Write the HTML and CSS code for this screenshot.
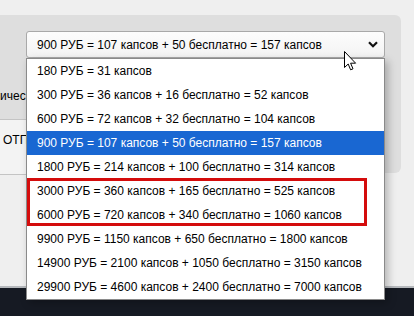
FILE: index.html
```html
<!DOCTYPE html>
<html lang="ru">
<head>
    <meta charset="UTF-8">
    <meta name="viewport" content="width=device-width, initial-scale=1.0">
    <title>Покупка капсов</title>
    <link rel="stylesheet" href="styles.css">
</head>
<body>
    <div class="page">
        <div class="panel">
            <div class="field">
                <div class="select">
                    <span>900 РУБ = 107 капсов + 50 бесплатно = 157 капсов</span>
                    <svg class="chevron" width="10" height="7" viewBox="0 0 10 7">
                        <path d="M1 1.2 L5 5.2 L9 1.2" fill="none" stroke="#111" stroke-width="2.2"/>
                    </svg>
                </div>
                <ul class="options">
                    <li>180 РУБ = 31 капсов</li>
                    <li>300 РУБ = 36 капсов + 16 бесплатно = 52 капсов</li>
                    <li>600 РУБ = 72 капсов + 32 бесплатно = 104 капсов</li>
                    <li class="selected">900 РУБ = 107 капсов + 50 бесплатно = 157 капсов</li>
                    <li>1800 РУБ = 214 капсов + 100 бесплатно = 314 капсов</li>
                    <li class="marked">
                        <div>3000 РУБ = 360 капсов + 165 бесплатно = 525 капсов</div>
                        <div>6000 РУБ = 720 капсов + 340 бесплатно = 1060 капсов</div>
                    </li>
                    <li>9900 РУБ = 1150 капсов + 650 бесплатно = 1800 капсов</li>
                    <li>14900 РУБ = 2100 капсов + 1050 бесплатно = 3150 капсов</li>
                    <li>29900 РУБ = 4600 капсов + 2400 бесплатно = 7000 капсов</li>
                </ul>
                <svg class="cursor" width="13" height="21" viewBox="0 0 13 21">
                    <path d="M0.5 0.5 L0.5 16.5 L4.2 13 L6.6 18.8 L9 17.8 L6.6 12.2 L11.6 12.2 Z" fill="#fff" stroke="#000" stroke-width="1"/>
                </svg>
            </div>
            <div class="row">ическ</div>
            <div class="send">ОТП</div>
        </div>
    </div>
    <div class="bottom"></div>
</body>
</html>
```

FILE: styles.css
```css
body {
    margin: 0;
    background-color: #efefef;
    font-family: "Liberation Sans", Arial, sans-serif;
    font-size: 12px;
    color: #000;
}
.page {
    height: 286px;
    padding-top: 15px;
    box-sizing: border-box;
}
.panel {
    width: 401px;
    height: 158px;
    background-color: #dedede;
    border-radius: 0 6px 6px 0;
}
.field {
    position: relative;
    margin-left: 26px;
    padding-top: 16px;
    width: 359px;
}
.select {
    height: 27px;
    box-sizing: border-box;
    border: 1px solid #a9a9a9;
    border-radius: 3px;
    background: linear-gradient(#fdfdfd, #f3f3f3);
    display: flex;
    align-items: center;
    justify-content: space-between;
    padding: 0 6px 0 10px;
}
.chevron {
    display: block;
}
.options {
    position: absolute;
    top: 43px;
    left: 0;
    width: 359px;
    box-sizing: border-box;
    margin: 0;
    padding: 0;
    list-style: none;
    background: white;
    border: 1px solid #8a8a8a;
    box-shadow: 3px 3px 8px rgba(0, 0, 0, 0.25);
    z-index: 2;
}
.options li {
    height: 24px;
    line-height: 24px;
    padding-left: 10px;
    white-space: nowrap;
}
.options .selected {
    background-color: #1967d2;
    color: white;
}
.options .marked {
    height: 48px;
    padding-left: 0;
    margin-right: 17px;
    border: 3px solid #d40c0c;
    box-sizing: border-box;
    margin-top: -1px;
    margin-bottom: 1px;
}
.options .marked div {
    padding-left: 7px;
    height: 21px;
    line-height: 21px;
}
.options .marked div + div {
    margin-top: 3px;
}
.cursor {
    position: absolute;
    left: 318px;
    top: 36px;
    z-index: 3;
}
.row {
    height: 61px;
    box-sizing: border-box;
    padding-top: 31px;
    white-space: nowrap;
    overflow: hidden;
    width: 26px;
}
.send {
    height: 56px;
    width: 26px;
    overflow: hidden;
    box-sizing: border-box;
    border-top: 1px solid #c4c4c4;
    border-bottom: 1px solid #c4c4c4;
    background-color: #f3f3f3;
    padding: 13px 0 0 3px;
    white-space: nowrap;
}
.bottom {
    height: 30px;
    border-top: 2px solid #b6b9bd;
    background-color: #161a23;
}
```
